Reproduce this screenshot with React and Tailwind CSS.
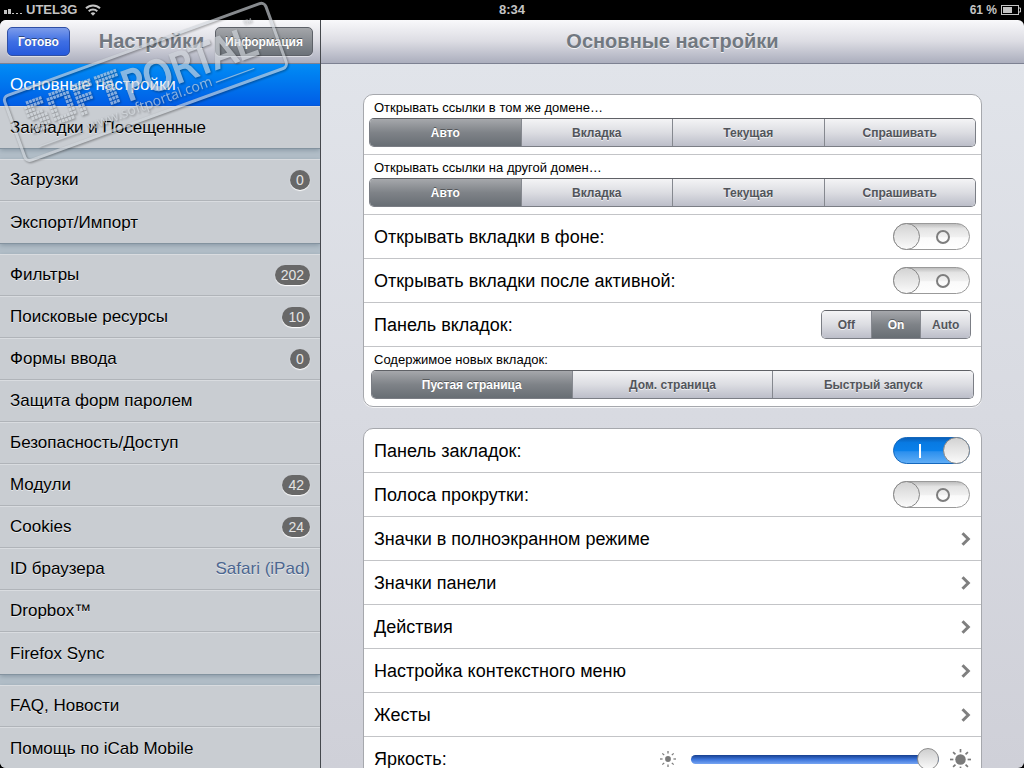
import { useState } from "react";

const sidebarGroups = [
  [{ label: "Основные настройки", selected: true }, { label: "Закладки и Посещенные" }],
  [{ label: "Загрузки", badge: "0" }, { label: "Экспорт/Импорт" }],
  [
    { label: "Фильтры", badge: "202" },
    { label: "Поисковые ресурсы", badge: "10" },
    { label: "Формы ввода", badge: "0" },
    { label: "Защита форм паролем" },
    { label: "Безопасность/Доступ" },
    { label: "Модули", badge: "42" },
    { label: "Cookies", badge: "24" },
    { label: "ID браузера", value: "Safari (iPad)" },
    { label: "Dropbox™" },
    { label: "Firefox Sync" },
  ],
  [{ label: "FAQ, Новости" }, { label: "Помощь по iCab Mobile" }],
];

function StatusBar() {
  return (
    <div className="grid h-5 shrink-0 grid-cols-3 items-center bg-black px-[3px] text-[13px] leading-5 font-bold text-[#c4c4c4]">
      <div className="flex items-center gap-1">
        <svg width="19" height="12" viewBox="0 0 19 12" fill="#c4c4c4" aria-hidden="true">
          <rect x="1" y="6" width="3" height="4" />
          <rect x="5" y="5" width="3" height="5" />
          <rect x="9" y="9" width="2" height="1" />
          <rect x="13" y="9" width="2" height="1" />
          <rect x="17" y="9" width="2" height="1" />
        </svg>
        <span>UTEL3G</span>
        <svg className="ml-1" width="16" height="12" viewBox="0 0 16 12" fill="none" stroke="#c4c4c4" strokeWidth="2" aria-hidden="true">
          <path d="M1 4.3a10 10 0 0 1 14 0" />
          <path d="M3.7 7.2a6.2 6.2 0 0 1 8.6 0" />
          <path d="M8 11.8 5.6 9.3a3.5 3.5 0 0 1 4.8 0Z" fill="#c4c4c4" stroke="none" />
        </svg>
      </div>
      <div className="text-center">8:34</div>
      <div className="flex items-center justify-end gap-1">
        <span className="text-xs leading-5">61 %</span>
        <svg width="20" height="10" viewBox="0 0 20 10" aria-hidden="true">
          <rect x="0.5" y="0.5" width="17" height="9" fill="none" stroke="#c4c4c4" />
          <rect x="2" y="2" width="9" height="6" fill="#c4c4c4" />
          <path d="M18 3h1.5v4H18" fill="none" stroke="#c4c4c4" />
        </svg>
      </div>
    </div>
  );
}

const barClass =
  "flex h-11 shrink-0 items-center border-b border-[#7d8192] bg-linear-to-b from-[#f9f9fb] via-[#dcdce3] to-[#abaebd]";
const titleClass =
  "flex-1 pb-[2px] text-center text-xl leading-6 font-bold whitespace-nowrap text-[#717880] [text-shadow:0_1px_0_rgba(255,255,255,0.8)]";
const barButton =
  "h-[29px] rounded-[5px] border text-xs font-bold text-white [text-shadow:0_-1px_0_rgba(0,0,0,0.45)] shadow-[0_1px_0_rgba(255,255,255,0.5)]";

function SidebarRow({ item, last }) {
  const tone = item.selected
    ? "border-[#0457d8] bg-linear-to-b from-[#058cf5] to-[#015de6] text-white"
    : "border-[#b0b4b9] bg-[#c9cdd2] text-black [text-shadow:0_1px_0_rgba(255,255,255,0.6)] shadow-[inset_0_1px_0_#d9dce0]";
  return (
    <li>
      <button
        className={`flex h-[42px] w-full items-center justify-between px-[10px] pt-px text-left text-[17px] ${tone} ${last ? "" : "border-b"}`}
      >
        <span>{item.label}</span>
        {item.badge && (
          <span className="min-w-[20px] rounded-full bg-[#686868] px-[6px] text-center text-sm leading-5 text-[#e4e4e4] shadow-[0_1px_1px_#fff] [text-shadow:none]">
            {item.badge}
          </span>
        )}
        {item.value && <span className="text-[#4c6690]">{item.value}</span>}
      </button>
    </li>
  );
}

function Sidebar() {
  return (
    <aside className="flex w-[321px] shrink-0 flex-col border-r border-[#45484d] bg-[#c9cdd2]">
      <header className={`${barClass} px-[7px]`}>
        <button className={`${barButton} w-[63px] border-[#2f4fa5] bg-linear-to-b from-[#7c9bea] via-[#3f6fe4] to-[#2559dc]`}>
          Готово
        </button>
        <h1 className={`${titleClass} pl-[18px]`}>Настройки</h1>
        <button className={`${barButton} w-[98px] border-[#5d6168] bg-linear-to-b from-[#a4a6aa] to-[#6c7279]`}>
          Информация
        </button>
      </header>
      <nav className="flex min-h-0 flex-1 flex-col gap-[11px] overflow-y-auto bg-[#b2bec8] [scrollbar-width:none]">
        {sidebarGroups.map((group, g) => (
          <ul key={g} className="shadow-[0_2px_5px_#8494a1,0_1px_0_#84919d]">
            {group.map((item, i) => (
              <SidebarRow key={item.label} item={item} last={i === group.length - 1} />
            ))}
          </ul>
        ))}
      </nav>
    </aside>
  );
}

function Segmented({ label, options, initial = 0, className = "" }) {
  const [active, setActive] = useState(initial);
  return (
    <div
      role="group"
      aria-label={label}
      className={`flex h-[29px] overflow-hidden rounded-[5px] border border-[#7b7e85] border-t-[#5f6166] ${className}`}
    >
      {options.map((option, i) => (
        <button
          key={option}
          aria-pressed={i === active}
          onClick={() => setActive(i)}
          className={`flex flex-1 items-center justify-center text-xs font-bold whitespace-nowrap ${i > 0 ? "border-l border-[#85888f]" : ""} ${
            i === active
              ? "bg-linear-to-b from-[#a6a8ac] via-[#7f8388] to-[#686e74] text-white [text-shadow:0_-1px_0_rgba(0,0,0,0.4)]"
              : "bg-linear-to-b from-[#f4f4f6] via-[#dcdde2] to-[#bcbec9] text-[#52555b] [text-shadow:0_1px_0_rgba(255,255,255,0.7)]"
          }`}
        >
          {option}
        </button>
      ))}
    </div>
  );
}

function SegmentedRow({ label, options, narrow = false }) {
  return (
    <div className={`flex flex-col ${narrow ? "px-[7px]" : "px-[5px]"}`}>
      <p className={`${narrow ? "px-[3px]" : "px-[5px]"} pt-[3px] text-[13px] leading-5`}>{label}</p>
      <Segmented label={label} options={options} className="mb-[7px]" />
    </div>
  );
}

function Toggle({ id, initial = false }) {
  const [on, setOn] = useState(initial);
  return (
    <span className="grid h-[27px] w-[77px]">
      <input
        id={id}
        type="checkbox"
        checked={on}
        onChange={() => setOn(!on)}
        className="col-start-1 row-start-1 h-full w-full opacity-0"
      />
      <svg className="pointer-events-none col-start-1 row-start-1" width="77" height="27" viewBox="0 0 77 27" aria-hidden="true">
        <defs>
          <linearGradient id={`${id}-off`} x1="0" y1="0" x2="0" y2="1">
            <stop offset="0" stopColor="#b9b9b9" />
            <stop offset="0.2" stopColor="#e4e4e4" />
            <stop offset="0.5" stopColor="#f0f0f0" />
            <stop offset="0.55" stopColor="#fafafa" />
            <stop offset="1" stopColor="#ffffff" />
          </linearGradient>
          <linearGradient id={`${id}-on`} x1="0" y1="0" x2="0" y2="1">
            <stop offset="0" stopColor="#0a5cb4" />
            <stop offset="0.2" stopColor="#087ae2" />
            <stop offset="0.5" stopColor="#0a80ea" />
            <stop offset="0.55" stopColor="#2c90ee" />
            <stop offset="1" stopColor="#62aef6" />
          </linearGradient>
          <linearGradient id={`${id}-knob`} x1="0" y1="0" x2="0" y2="1">
            <stop offset="0" stopColor="#d2d2d2" />
            <stop offset="1" stopColor="#fbfbfb" />
          </linearGradient>
        </defs>
        <rect x="0.5" y="0.5" width="76" height="26" rx="13" fill={`url(#${id}-${on ? "on" : "off"})`} stroke={on ? "#1468bd" : "#9a9a9a"} />
        {on ? (
          <rect x="26" y="7" width="2" height="14" fill="#fff" />
        ) : (
          <circle cx="50" cy="14" r="6" fill="none" stroke="#7d7d7d" strokeWidth="2" />
        )}
        <circle cx={on ? 63.5 : 13.5} cy="13.5" r="13" fill={`url(#${id}-knob)`} stroke="#868686" />
      </svg>
    </span>
  );
}

function ToggleRow({ id, label, initial }) {
  return (
    <div className="flex h-11 items-center justify-between pr-[11px] pl-[10px]">
      <label htmlFor={id}>{label}</label>
      <Toggle id={id} initial={initial} />
    </div>
  );
}

function LinkRow({ label }) {
  return (
    <a href="#" className="flex h-11 items-center justify-between px-[10px]">
      <span>{label}</span>
      <svg width="10" height="14" viewBox="0 0 10 14" fill="none" stroke="#7f7f7f" strokeWidth="3" aria-hidden="true">
        <path d="M1.5 1.2 7.3 7l-5.8 5.8" />
      </svg>
    </a>
  );
}

function Sun({ size, core }) {
  const angles = [0, 45, 90, 135, 180, 225, 270, 315];
  return (
    <svg width={size} height={size} viewBox="-10 -10 20 20" aria-hidden="true">
      <circle r={core} fill="#7a7a7a" />
      {angles.map((a) => (
        <path key={a} d="M0-10v3.2" stroke="#7a7a7a" strokeWidth="1.6" transform={`rotate(${a})`} />
      ))}
    </svg>
  );
}

function BrightnessRow() {
  const [value, setValue] = useState(100);
  return (
    <div className="flex h-11 items-center px-[10px]">
      <label htmlFor="brightness" className="flex-1">
        Яркость:
      </label>
      <Sun size={16} core={3.6} />
      <input
        id="brightness"
        type="range"
        value={value}
        onChange={(e) => setValue(Number(e.target.value))}
        className="mr-[11px] ml-[15px] h-[9px] w-[248px] appearance-none rounded-full bg-linear-to-b from-[#17408f] via-[#3c74da] to-[#77a5f2] [&::-webkit-slider-thumb]:h-[22px] [&::-webkit-slider-thumb]:w-[22px] [&::-webkit-slider-thumb]:appearance-none [&::-webkit-slider-thumb]:rounded-full [&::-webkit-slider-thumb]:border [&::-webkit-slider-thumb]:border-[#8c8c8c] [&::-webkit-slider-thumb]:bg-linear-to-b [&::-webkit-slider-thumb]:from-[#cfcfcf] [&::-webkit-slider-thumb]:to-[#fafafa]"
      />
      <Sun size={21} core={5} />
    </div>
  );
}

function Card({ children }) {
  return (
    <section className="divide-y divide-[#c3c4c7] rounded-[10px] border border-[#a6a8ad] bg-white shadow-[0_1px_0_rgba(255,255,255,0.7)]">
      {children}
    </section>
  );
}

function Settings() {
  const linkOptions = ["Авто", "Вкладка", "Текущая", "Спрашивать"];
  return (
    <main className="flex min-w-0 flex-1 flex-col">
      <header className={barClass}>
        <h2 className={titleClass}>Основные настройки</h2>
      </header>
      <div className="flex min-h-0 flex-1 flex-col gap-[21px] overflow-y-auto bg-linear-to-b from-[#e1e4ea] to-[#cfd0d8] px-[42px] pt-[30px] text-lg [scrollbar-width:none]">
        <Card>
          <SegmentedRow label="Открывать ссылки в том же домене…" options={linkOptions} />
          <SegmentedRow label="Открывать ссылки на другой домен…" options={linkOptions} />
          <ToggleRow id="background-tabs" label="Открывать вкладки в фоне:" />
          <ToggleRow id="after-active" label="Открывать вкладки после активной:" />
          <div className="flex h-11 items-center justify-between px-[10px]">
            <span>Панель вкладок:</span>
            <Segmented label="Панель вкладок" options={["Off", "On", "Auto"]} initial={1} className="w-[150px]" />
          </div>
          <SegmentedRow
            label="Содержимое новых вкладок:"
            options={["Пустая страница", "Дом. страница", "Быстрый запуск"]}
            narrow
          />
        </Card>
        <Card>
          <ToggleRow id="bookmarks-bar" label="Панель закладок:" initial />
          <ToggleRow id="scroll-bar" label="Полоса прокрутки:" />
          <LinkRow label="Значки в полноэкранном режиме" />
          <LinkRow label="Значки панели" />
          <LinkRow label="Действия" />
          <LinkRow label="Настройка контекстного меню" />
          <LinkRow label="Жесты" />
          <BrightnessRow />
        </Card>
      </div>
    </main>
  );
}

const pixelRows = [
  ".#####..#####..######.#######",
  "######.#######.######.#######",
  "###....##...##.##.......###..",
  "#####..##...##.#####....###..",
  ".#####.##...##.#####....###..",
  "...###.##...##.##.......###..",
  "######.#######.##.......###..",
  "#####...#####..##.......###..",
];

function StampShapes() {
  return (
    <g transform="translate(3 97) rotate(-20)">
      <rect x="0" y="0" width="278" height="69" rx="5" fill="none" strokeWidth="3" />
      <path d="M17 59h46M205 59h41" fill="none" strokeWidth="1.2" />
      <text x="116" y="47" fontSize="41" strokeWidth="1.6" className="font-['DejaVu_Sans_Condensed','DejaVu_Sans',sans-serif]">
        PORTAL
      </text>
      <g stroke="none">
        {pixelRows.flatMap((row, y) =>
          [...row].map((cell, x) =>
            cell === "#" ? <rect key={`${x}-${y}`} x={16 + x * 3.45} y={12 + y * 4.2} width="2.8" height="3.2" /> : null
          )
        )}
        <text x="69" y="61" fontSize="14" className="font-['Noto_Sans',sans-serif]">
          www.softportal.com
        </text>
        <text x="250" y="18" fontSize="11" className="font-['Liberation_Sans',sans-serif]">
          ™
        </text>
      </g>
    </g>
  );
}

function Stamp() {
  return (
    <svg className="pointer-events-none absolute top-0 left-0" width="300" height="170" viewBox="0 0 300 170" aria-hidden="true">
      <g className="opacity-65 drop-shadow-[1px_1px_1px_rgba(0,0,0,0.55)]" fill="#d0d5da" stroke="#d0d5da">
        <StampShapes />
      </g>
    </svg>
  );
}

export default function App() {
  return (
    <div className="relative flex h-screen flex-col overflow-hidden bg-black font-['Liberation_Sans',Arial,sans-serif] text-black">
      <StatusBar />
      <div className="flex min-h-0 flex-1 overflow-hidden rounded-[6px]">
        <Sidebar />
        <Settings />
      </div>
      <Stamp />
    </div>
  );
}
